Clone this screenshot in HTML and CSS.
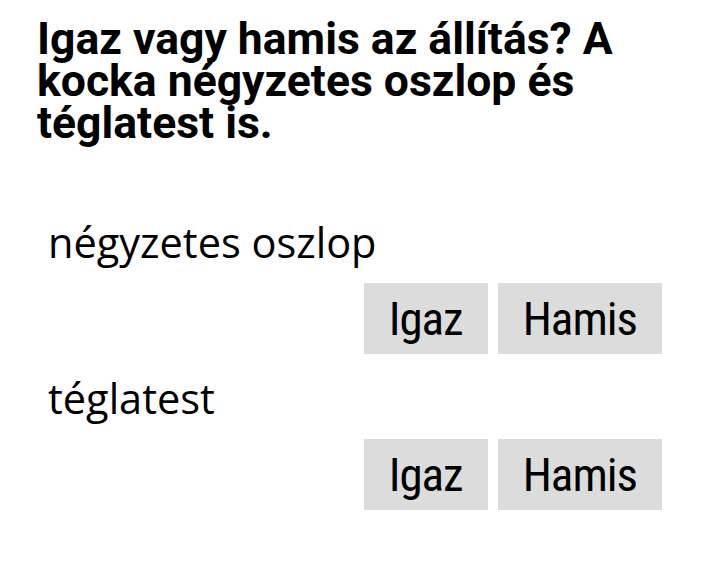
FILE: index.html
```html
<!DOCTYPE html>
<html lang="hu">
<head>
<meta charset="utf-8">
<link rel="stylesheet" href="styles.css">
</head>
<body>
<main class="quiz">
  <h1 class="question">Igaz vagy hamis az állítás? A kocka négyzetes oszlop és téglatest is.</h1>
  <div class="items">
    <div class="item">
      <div class="label">négyzetes oszlop</div>
      <div class="choices">
        <button class="choice">Igaz</button>
        <button class="choice">Hamis</button>
      </div>
    </div>
    <div class="item">
      <div class="label">téglatest</div>
      <div class="choices">
        <button class="choice">Igaz</button>
        <button class="choice">Hamis</button>
      </div>
    </div>
  </div>
</main>
</body>
</html>
```
FILE: styles.css
```css
html, body {
  margin: 0;
  padding: 0;
  background: #ffffff;
}
.quiz {
  padding: 18px 58px 0 37px;
  color: #000;
}
.question {
  margin: 0;
  font-family: Roboto, "Liberation Sans", sans-serif;
  font-weight: 700;
  font-size: 44.5px;
  line-height: 42px;
  width: 640px;
}
.items {
  margin-top: 73px;
  padding-left: 11px;
}
.item {
  display: flex;
  flex-direction: column;
}
.label {
  font-family: "Open Sans", "Noto Sans", sans-serif;
  font-size: 41.5px;
  line-height: 50px;
}
.choices {
  display: flex;
  justify-content: flex-end;
  gap: 10px;
  margin-top: 16px;
  margin-bottom: 19px;
}
.choice {
  font-family: Roboto, "Liberation Sans", sans-serif;
  font-size: 47px;
  font-stretch: 75%;
  letter-spacing: -1px;
  background: #dcdcdc;
  border: none;
  color: #000;
  height: 71px;
  padding: 0 25px;
  margin: 0;
}
```
